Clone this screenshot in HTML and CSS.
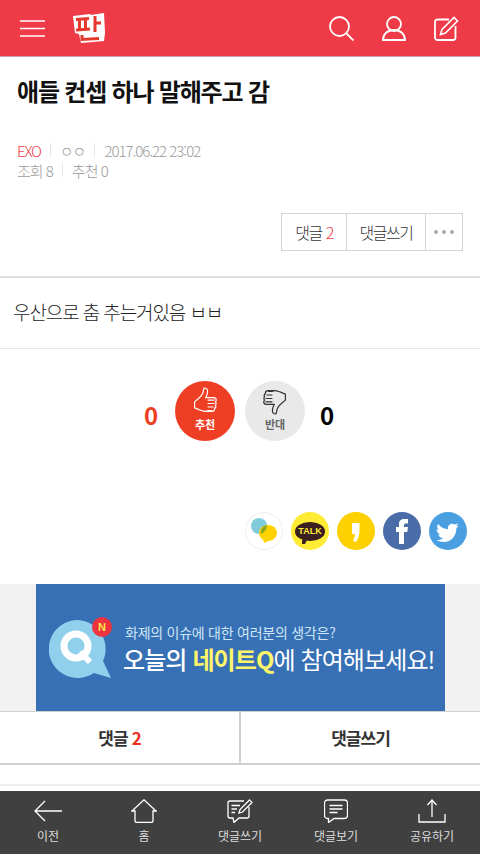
FILE: index.html
```html
<!DOCTYPE html>
<html lang="ko">
  <head>
    <meta charset="UTF-8" />
    <meta name="viewport" content="width=device-width, initial-scale=1.0" />
    <title>애들 컨셉 하나 말해주고 감 - 판</title>
    <link rel="stylesheet" href="styles.css">
  </head>
  <body>
    <div class="header">
      <svg class="menu-icon" width="25" height="17" viewBox="0 0 25 17"><path d="M0 1h25M0 8.500h25M0 16h25" stroke="#fff" stroke-width="1.500" fill="none"/></svg>
      <svg class="logo" width="32" height="30" viewBox="0 0 32 30">
        <path d="M0 3L17 1l1 1L31 0l1 20-1 8-23 2-2-9-4-1z" fill="#fff"/>
        <path d="M3 6.500L16 5.500M6.500 7v9M12.500 6.500v9M3 17l14-1M22 3v16M22 10h6M9 22v4.500l17-1" stroke="#e5392d" stroke-width="3" fill="none"/>
      </svg>
      <div class="header-icons">
        <svg width="25" height="25" viewBox="0 0 25 25"><circle cx="10.500" cy="10.500" r="9.500" stroke="#fff" stroke-width="1.800" fill="none"/><path d="M17.500 17.500l7 7" stroke="#fff" stroke-width="1.800" fill="none"/></svg>
        <svg width="24" height="25" viewBox="0 0 24 25"><circle cx="12" cy="8" r="7" stroke="#fff" stroke-width="1.800" fill="none"/><path d="M1 24c0-6 4.500-10 11-10s11 4 11 10z" stroke="#fff" stroke-width="1.800" fill="none"/></svg>
        <svg width="25" height="25" viewBox="0 0 25 25"><path d="M15 3.500H3.500a2.500 2.500 0 0 0-2.500 2.500v15.500A2.500 2.500 0 0 0 3.500 24H19a2.500 2.500 0 0 0 2.500-2.500V10" stroke="#fff" stroke-width="1.800" fill="none"/><path d="M6.500 18.500l1.500-5L20 1.500l3.500 3.500L11.500 17z" stroke="#fff" stroke-width="1.600" fill="none"/></svg>
      </div>
    </div>

    <div class="post-head">
      <h1>애들 컨셉 하나 말해주고 감</h1>
      <div class="meta">
        <span class="cate">EXO</span><i></i><span>ㅇㅇ</span><i></i><span>2017.06.22 23:02</span>
      </div>
      <div class="meta">
        <span>조회 8</span><i></i><span>추천 0</span>
      </div>
      <div class="post-btns">
        <div class="post-btn">댓글 <em>2</em></div>
        <div class="post-btn">댓글쓰기</div>
        <div class="post-btn more"><b></b><b></b><b></b></div>
      </div>
    </div>

    <div class="post-body">우산으로 춤 추는거있음 ㅂㅂ</div>

    <div class="vote">
      <span class="vote-num up">0</span>
      <div class="vote-btn up">
        <svg width="26" height="28" viewBox="0 0 30 32"><path d="M3 17c3-3 7-5 9-9 1-2 1-5 2-7 2 0 4 1 4 4 0 3-1 5-2 7h9c2 0 3 1 3 3 0 1-1 2-1 2 1 1 1 3 0 4 1 1 0 3-1 4 0 2-1 3-3 3h-7c-3 0-5-1-8-2l-5-2z" stroke="#fff" stroke-width="1.400" fill="none"/><path d="M18 15h8M18 19h8M18 23h7M17 27h6" stroke="#fff" stroke-width="1.200" fill="none"/></svg>
        <span>추천</span>
      </div>
      <div class="vote-btn down">
        <svg width="26" height="28" viewBox="0 0 30 32"><path d="M27 15c-3 3-7 5-9 9-1 2-1 5-2 7-2 0-4-1-4-4 0-3 1-5 2-7H5c-2 0-3-1-3-3 0-1 1-2 1-2-1-1-1-3 0-4-1-1 0-3 1-4 0-2 1-3 3-3h7c3 0 5 1 8 2l5 2z" stroke="#333" stroke-width="1.400" fill="none"/><path d="M12 17H4M12 13H4M12 9H5M13 5H7" stroke="#333" stroke-width="1.200" fill="none"/></svg>
        <span>반대</span>
      </div>
      <span class="vote-num">0</span>
    </div>

    <div class="share">
      <svg width="38" height="38" viewBox="0 0 38 38"><circle cx="19" cy="19" r="18.500" fill="#fff" stroke="#eee"/><circle cx="14" cy="14" r="8" fill="#7fcbdc"/><ellipse cx="23" cy="21" rx="9" ry="8" fill="#ffd200"/><path d="M18 27l1 4 6-3z" fill="#ffd200"/><path d="M15.700 21.800A8 8 0 0 0 21.800 13.100 9 8 0 0 0 15.700 21.800z" fill="#8aa81e"/></svg>
      <div class="kakao"><span>TALK</span></div>
      <svg width="38" height="38" viewBox="0 0 38 38"><circle cx="19" cy="19" r="19" fill="#fdd000"/><path d="M15 11h7.500v8c0 4-1.500 8-3.500 11l-3-1c1.300-2.500 1.800-4.500 2-7h-3z" fill="#fff"/></svg>
      <svg width="38" height="38" viewBox="0 0 38 38"><circle cx="19" cy="19" r="19" fill="#4a6ca8"/><path d="M16 32V20h-3v-5h3v-3c0-3.500 2-5 5.500-5H25v4.500h-2c-1.500 0-2 .5-2 2V15h4l-.7 5H21v12z" fill="#fff"/></svg>
      <svg width="38" height="38" viewBox="0 0 38 38"><circle cx="19" cy="19" r="19" fill="#4a9fe0"/><path d="M9 12c3 3.500 6 5 10 5.300C18.500 13 22 10.500 25.500 12.500c1 0 2.500-.5 3.500-1.200-.3 1.300-1.200 2.300-2 2.900 1 0 2-.3 2.800-.7-.6 1-1.500 1.900-2.400 2.500C27.500 24 22 30 15 30c-3 0-5.500-.8-7.500-2 2.500.2 5-.5 6.500-2-2.500 0-4-1.500-4.700-3.500h2.300c-2.500-.7-4-2.800-4-5.300.7.400 1.500.6 2.300.7C8 16.500 7.700 14 9 12z" fill="#fff"/></svg>
    </div>

    <div class="banner-wrap">
      <div class="banner">
        <div class="q-icon">
          <svg width="62" height="60" viewBox="0 0 62 60"><path d="M29 1a29 29 0 1 0 16 53l17 5-8-17A29 29 0 0 0 29 1z" fill="#90d0ec"/><circle cx="27" cy="27" r="12" fill="none" stroke="#fff" stroke-width="7"/><path d="M31 33l10 10" stroke="#fff" stroke-width="6"/></svg>
          <span class="q-badge">N</span>
        </div>
        <div class="banner-text">
          <p class="small">화제의 이슈에 대한 여러분의 생각은?</p>
          <p class="big"><span>오늘의</span> <b>네이트Q</b>에 참여해보세요!</p>
        </div>
      </div>
    </div>

    <div class="tabs">
      <div class="tab">댓글 <em>2</em></div>
      <div class="tab">댓글쓰기</div>
    </div>
    <div class="gap"></div>

    <div class="toolbar">
      <div class="tool">
        <svg width="28" height="24" viewBox="0 0 28 24"><path d="M28 12H1M11 2L1 12l10 10" stroke="#fff" stroke-width="1.300" fill="none"/></svg>
        <span>이전</span>
      </div>
      <div class="tool">
        <svg width="26" height="24" viewBox="0 0 26 24"><path d="M1 12L13 .8 25 12h-3v9.500a2 2 0 0 1-2 2H6a2 2 0 0 1-2-2V12z" stroke="#fff" stroke-width="1.300" fill="none"/></svg>
        <span>홈</span>
      </div>
      <div class="tool">
        <svg width="26" height="24" viewBox="0 0 26 24"><path d="M17 2H3a2 2 0 0 0-2 2v13a2 2 0 0 0 2 2h3l1 4.500 5-4.500h8a2 2 0 0 0 2-2V8" stroke="#fff" stroke-width="1.300" fill="none"/><path d="M12 14l1-3.500L22.500 1 25 3.500 15.500 13zM4.500 6.500H13M4.500 10H10M4.500 13.500H8" stroke="#fff" stroke-width="1.300" fill="none"/></svg>
        <span>댓글쓰기</span>
      </div>
      <div class="tool">
        <svg width="24" height="24" viewBox="0 0 24 24"><path d="M3.500 1h17a3 3 0 0 1 3 3v12.500a3 3 0 0 1-3 3H10L4.500 23.500v-4h-1a3 3 0 0 1-3-3V4a3 3 0 0 1 3-3z" stroke="#fff" stroke-width="1.300" fill="none"/><path d="M5.500 6.500h13M5.500 10h13M5.500 13.500h8" stroke="#fff" stroke-width="1.300" fill="none"/></svg>
        <span>댓글보기</span>
      </div>
      <div class="tool">
        <svg width="28" height="24" viewBox="0 0 28 24"><path d="M1 15v8h26v-8M14 18V1M9.500 6L14 1l4.500 5" stroke="#fff" stroke-width="1.300" fill="none"/></svg>
        <span>공유하기</span>
      </div>
    </div>
  </body>
</html>
```

FILE: styles.css
```css
* {
  box-sizing: border-box;
}
body {
  margin: 0;
  width: 480px;
  height: 854px;
  overflow: hidden;
  font-family: "Noto Sans CJK KR", "Noto Sans", sans-serif;
  background-color: #fff;
  color: #111;
}
.header {
  display: flex;
  align-items: center;
  height: 57px;
  padding: 0 21px 0 20px;
  background-color: #ef3b47;
  border-bottom: 1px solid #c9a0a5;
}
.logo {
  margin: 0 0 0 28px;
}
.header-icons {
  display: flex;
  align-items: center;
  gap: 28px;
  margin-left: auto;
}
.post-head {
  height: 221px;
  padding: 0 17px;
  border-bottom: 2px solid #ddd;
}
.post-head h1 {
  margin: 0;
  padding-top: 16px;
  height: 83px;
  font-size: 24px;
  line-height: 36px;
  font-weight: 700;
  letter-spacing: -1.2px;
}
.meta {
  display: flex;
  align-items: center;
  height: 20px;
  font-size: 15px;
  font-weight: 300;
  letter-spacing: -1px;
  color: #999;
}
.meta i {
  width: 1px;
  height: 14px;
  margin: 0 9px;
  background: #e5e5e5;
}
.cate {
  letter-spacing: -1.2px;
  color: #f03c49;
}
.post-btns {
  display: flex;
  justify-content: flex-end;
  margin: 33px 0 0;
  height: 38px;
}
.post-btn {
  display: flex;
  align-items: center;
  justify-content: center;
  gap: 4px;
  width: 66px;
  font-size: 16px;
  font-weight: 300;
  letter-spacing: -1.5px;
  color: #333;
  border: 1px solid #d5d5d5;
  border-left: 0;
}
.post-btn:first-child {
  border-left: 1px solid #d5d5d5;
}
.post-btn:nth-child(2) {
  width: 79px;
}
.post-btn.more {
  width: 37px;
}
.post-btn em {
  font-style: normal;
  color: #f03c49;
}
.more b {
  width: 4px;
  height: 4px;
  border-radius: 50%;
  background: #aaa;
}
.post-body {
  height: 71px;
  padding: 19px 13px 0;
  font-size: 19px;
  font-weight: 300;
  line-height: 30px;
  letter-spacing: -1.1px;
  color: #222;
  border-bottom: 1px solid #e8e8e8;
}
.vote {
  display: flex;
  align-items: center;
  gap: 10px;
  height: 134px;
  padding: 0 0 10px 137px;
}
.vote-num {
  width: 24px;
  margin-top: 6px;
  text-align: center;
  font-size: 24px;
  font-weight: 700;
  color: #000;
}
.vote-num.up {
  width: 28px;
  color: #ee3f24;
}
.vote-btn {
  display: flex;
  flex-direction: column;
  align-items: center;
  width: 60px;
  height: 60px;
  padding-top: 6px;
  border-radius: 50%;
  font-size: 11px;
  line-height: 14px;
  font-weight: 700;
}
.vote-btn svg {
  margin-bottom: 2px;
}
.vote-btn.up {
  background: #ee3f24;
  color: #fff;
}
.vote-btn.down {
  background: #e9e9e9;
  color: #666;
}
.share {
  display: flex;
  justify-content: flex-end;
  gap: 8px;
  height: 101px;
  padding: 29px 13px 0 0;
}
.kakao {
  display: flex;
  align-items: center;
  justify-content: center;
  width: 38px;
  height: 38px;
  border-radius: 50%;
  background: #ffeb33;
}
.kakao span {
  position: relative;
  padding: 4px 3px;
  border-radius: 50%;
  background: #3b1e1e;
  color: #ffeb33;
  font-family: "Liberation Sans", sans-serif;
  font-size: 9px;
  line-height: 11px;
  font-weight: 700;
}
.kakao span::after {
  content: "";
  position: absolute;
  left: 7px;
  bottom: -3px;
  border-left: 3px solid #3b1e1e;
  border-right: 2px solid transparent;
  border-top: 4px solid #3b1e1e;
}
.banner-wrap {
  height: 127px;
  padding: 0 35px 0 36px;
  background: #f2f2f2;
}
.banner {
  display: flex;
  align-items: center;
  height: 127px;
  padding: 0 0 0 13px;
  background: #3770b4;
}
.q-icon {
  position: relative;
  width: 62px;
  height: 60px;
  margin-top: 3px;
}
.q-badge {
  position: absolute;
  top: -2px;
  left: 43px;
  width: 20px;
  height: 20px;
  border-radius: 50%;
  background: #ee3340;
  color: #ffe94a;
  font-family: "Liberation Sans", sans-serif;
  font-size: 11px;
  line-height: 20px;
  font-weight: 700;
  text-align: center;
}
.banner-text {
  margin-left: 13px;
  color: #fff;
  white-space: nowrap;
}
.banner-text p {
  margin: 0;
}
.banner-text .small {
  margin-left: 1px;
  font-size: 14px;
  line-height: 22px;
  letter-spacing: -0.25px;
  color: #cfe6f5;
}
.banner-text .big {
  margin-left: -1px;
  font-size: 24px;
  line-height: 31px;
  letter-spacing: -0.9px;
}
.big span {
  font-weight: 500;
}
.big b {
  color: #fff56a;
}
.tabs {
  display: flex;
  height: 54px;
  border-top: 1px solid #d0d0d0;
  border-bottom: 2px solid #d0d0d0;
}
.tab {
  flex: 1;
  display: flex;
  align-items: center;
  justify-content: center;
  gap: 4px;
  padding-bottom: 1px;
  font-size: 17px;
  font-weight: 700;
  letter-spacing: -1px;
  color: #333;
}
.tab:first-child {
  border-right: 2px solid #d0d0d0;
}
.tab em {
  font-style: normal;
  color: #ee3324;
}
.gap {
  height: 21px;
  margin-bottom: 5px;
  border-bottom: 2px solid #eee;
}
.toolbar {
  display: flex;
  height: 63px;
  padding-top: 8px;
  background: #404040;
}
.tool {
  flex: 1;
  display: flex;
  flex-direction: column;
  align-items: center;
  font-size: 12px;
  line-height: 16px;
  color: #ddd;
}
.tool svg {
  margin-bottom: 5px;
}
```
